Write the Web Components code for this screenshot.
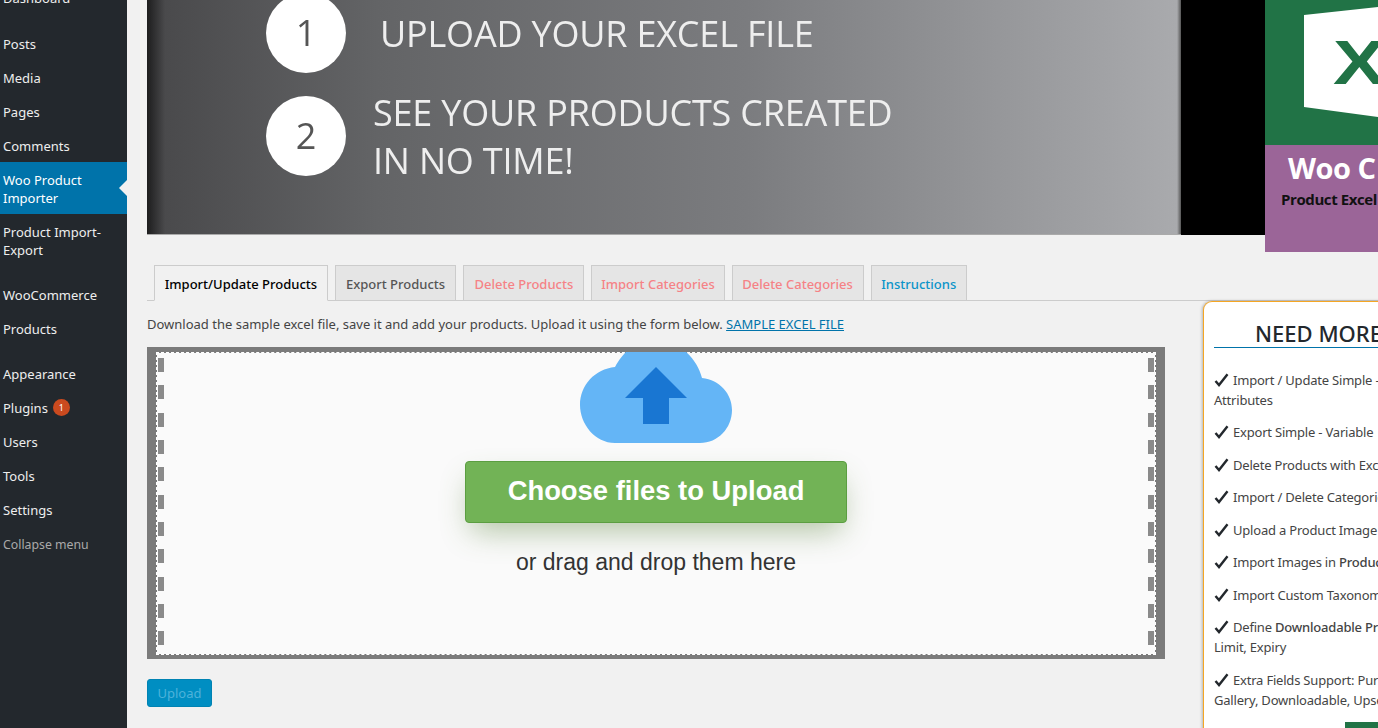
<!DOCTYPE html>
<html lang="en">
<head>
<meta charset="utf-8">
<title>Woo Product Importer</title>
<style>
	html, body { margin: 0; height: 100%; overflow: hidden; }
	body {
		display: flex;
		background: #f1f1f1;
		color: #444;
		font: 13px/20px "Noto Sans", "Open Sans", sans-serif;
	}
</style>
</head>
<body>
<wp-sidebar>
	<wp-menu-item style="margin-top:-19px">Dashboard</wp-menu-item>
	<wp-menu-item style="margin-top:12px">Posts</wp-menu-item>
	<wp-menu-item>Media</wp-menu-item>
	<wp-menu-item>Pages</wp-menu-item>
	<wp-menu-item>Comments</wp-menu-item>
	<wp-menu-item current style="margin-top:-1px;padding-top:9px;padding-bottom:7px">Woo Product Importer</wp-menu-item>
	<wp-menu-item style="padding-top:9px">Product Import-Export</wp-menu-item>
	<wp-menu-item style="margin-top:11px">WooCommerce</wp-menu-item>
	<wp-menu-item>Products</wp-menu-item>
	<wp-menu-item style="margin-top:11px">Appearance</wp-menu-item>
	<wp-menu-item badge="1">Plugins</wp-menu-item>
	<wp-menu-item>Users</wp-menu-item>
	<wp-menu-item>Tools</wp-menu-item>
	<wp-menu-item>Settings</wp-menu-item>
	<wp-menu-item muted>Collapse menu</wp-menu-item>
</wp-sidebar>
<importer-page>
	<promo-banner></promo-banner>
	<tab-bar>
		<nav-tab active>Import/Update Products</nav-tab>
		<nav-tab style="padding-inline:10.2px">Export Products</nav-tab>
		<nav-tab tone="red" style="padding-inline:10.2px">Delete Products</nav-tab>
		<nav-tab tone="red" style="padding-inline:8.7px">Import Categories</nav-tab>
		<nav-tab tone="red">Delete Categories</nav-tab>
		<nav-tab tone="blue">Instructions</nav-tab>
	</tab-bar>
	<upload-form slot="form"></upload-form>
	<feature-panel slot="panel" heading="NEED MORE">
		<feature-item>Import / Update Simple -<br>Attributes</feature-item>
		<feature-item>Export Simple - Variable</feature-item>
		<feature-item>Delete Products with Excel</feature-item>
		<feature-item>Import / Delete Categories</feature-item>
		<feature-item>Upload a Product Image</feature-item>
		<feature-item>Import Images in <b>Product</b></feature-item>
		<feature-item>Import Custom Taxonomies</feature-item>
		<feature-item>Define <b>Downloadable Products</b><br>Limit, Expiry</feature-item>
		<feature-item>Extra Fields Support: Purchase<br>Gallery, Downloadable, Upsell</feature-item>
	</feature-panel>
</importer-page>

<script>
// Admin menu column
class WpSidebar extends HTMLElement {
	constructor() {
		super();
		this.attachShadow({mode:'open'});
		this.shadowRoot.innerHTML = `
			<style>
				:host {
					display: block;
					flex: 0 0 127px;
					height: 100%;
					overflow: hidden;
					background: #23282d;
				}
			</style>
			<slot></slot>
		`;
	}
}

class WpMenuItem extends HTMLElement {
	constructor() {
		super();
		this.attachShadow({mode:'open'});
		const badge = this.getAttribute('badge');
		this.shadowRoot.innerHTML = `
			<style>
				:host {
					display: block;
					position: relative;
					padding: 8px 4px 8px 3px;
					line-height: 18px;
					color: #eee;
				}
				:host([current]) { background: #0073aa; color: #fff; }
				:host([current])::after {
					content: '';
					position: absolute;
					right: 0;
					top: 50%;
					margin-top: -8px;
					border: 8px solid transparent;
					border-left-width: 0;
					border-right-color: #f1f1f1;
				}
				:host([muted]) { color: #aaa; font-size: 12.3px; padding-top: 9px; }
				.badge {
					display: inline-block;
					width: 17px;
					height: 17px;
					margin-left: 5px;
					border-radius: 50%;
					background: #ca4a1f;
					color: #fff;
					font-size: 9px;
					line-height: 17px;
					text-align: center;
					vertical-align: top;
				}
			</style>
			<slot></slot>${badge ? `<span class="badge">${badge}</span>` : ''}
		`;
	}
}

// Two-part layout: banner and tabs on top, form and sales panel below
class ImporterPage extends HTMLElement {
	constructor() {
		super();
		this.attachShadow({mode:'open'});
		this.shadowRoot.innerHTML = `
			<style>
				:host {
					display: block;
					flex: 1;
					min-width: 0;
					height: 100%;
					overflow: hidden;
					padding-left: 20px;
				}
				.columns {
					display: flex;
					gap: 38px;
					align-items: flex-start;
				}
			</style>
			<slot></slot>
			<div class="columns">
				<slot name="form"></slot>
				<slot name="panel"></slot>
			</div>
		`;
	}
}

class PromoBanner extends HTMLElement {
	constructor() {
		super();
		this.attachShadow({mode:'open'});
		this.shadowRoot.innerHTML = `
			<style>
				:host {
					display: flex;
					height: 252px;
					align-items: flex-start;
					overflow: hidden;
					font-family: "Open Sans", sans-serif;
				}
				.art {
					flex: 0 0 1034px;
					box-sizing: border-box;
					height: 235px;
					padding-left: 119px;
					overflow: hidden;
					background: linear-gradient(90deg, #1d1d1e 0, #4a4a4c 18px, #636466 230px, #7b7c7f 600px, #a7a8ab 1010px, #a9aaad 1030px, #555 1034px);
					border-bottom: 1px solid #aaa;
					color: #eee;
					filter: blur(.45px);
				}
				.step { display: flex; align-items: center; }
				.step:first-child { margin-top: -7px; }
				.step + .step { margin-top: 23px; align-items: flex-start; }
				.num {
					flex: 0 0 80px;
					height: 80px;
					border-radius: 50%;
					background: #fff;
					color: #555;
					font-size: 36px;
					line-height: 80px;
					text-align: center;
				}
				.say {
					font-size: 36px;
					line-height: 48px;
					letter-spacing: -.2px;
					white-space: nowrap;
				}
				.one { margin-left: 34px; margin-top: 2px; }
				.two { margin-left: 27px; margin-top: -7px; }
				.gap { flex: 0 0 84px; height: 235px; background: #000; }
				.box {
					flex: 0 0 113px;
					height: 252px;
					overflow: hidden;
					background: #9b6598;
					font-family: "Open Sans", sans-serif;
					white-space: nowrap;
				}
				.green {
					height: 145px;
					padding: 7px 0 0 39px;
					box-sizing: border-box;
					background: #217346;
				}
				.sheet {
					height: 110px;
					padding-left: 29px;
					background: #fff;
					clip-path: polygon(0 8px, 100% 0, 100% 100%, 0 100px);
					color: #217346;
					font: bold 63px/110px "Liberation Sans", sans-serif;
					overflow: hidden;
				}
				.sheet span { display: inline-block; transform: scaleX(1.25); transform-origin: left; }
				.woo {
					padding: 3px 0 0 23px;
					color: #fff;
					font-size: 29px;
					font-weight: 700;
					line-height: 40px;
					letter-spacing: -.5px;
				}
				.sub {
					padding: 1px 0 0 16px;
					color: #111;
					font-size: 15px;
					font-weight: 700;
					line-height: 20px;
					letter-spacing: -.4px;
				}
			</style>
			<div class="art">
				<div class="step"><div class="num">1</div><div class="say one">UPLOAD YOUR EXCEL FILE</div></div>
				<div class="step"><div class="num">2</div><div class="say two">SEE YOUR PRODUCTS CREATED<br>IN NO TIME!</div></div>
			</div>
			<div class="gap"></div>
			<div class="box">
				<div class="green"><div class="sheet"><span>X</span></div></div>
				<div class="woo">Woo C</div>
				<div class="sub">Product Excel</div>
			</div>
		`;
	}
}

class TabBar extends HTMLElement {
	constructor() {
		super();
		this.attachShadow({mode:'open'});
		this.shadowRoot.innerHTML = `
			<style>
				:host {
					display: flex;
					gap: 7px;
					margin-top: 13px;
					padding-left: 7px;
					height: 36px;
					box-sizing: border-box;
					border-bottom: 1px solid #ccc;
				}
			</style>
			<slot></slot>
		`;
	}
}

class NavTab extends HTMLElement {
	constructor() {
		super();
		this.attachShadow({mode:'open'});
		this.shadowRoot.innerHTML = `
			<style>
				:host {
					display: block;
					height: 36px;
					box-sizing: border-box;
					padding: 8px 9.7px;
					border: 1px solid #ccc;
					background: #e5e5e5;
					color: #555;
					font-weight: 500;
					line-height: 20px;
					white-space: nowrap;
				}
				:host([active]) { background: #f1f1f1; border-bottom-color: #f1f1f1; color: #000; }
				:host([tone=red]) { color: #f58286; }
				:host([tone=blue]) { color: #0a94c9; }
			</style>
			<slot></slot>
		`;
	}
}

// Instruction line, drop zone and submit button
class UploadForm extends HTMLElement {
	constructor() {
		super();
		this.attachShadow({mode:'open'});
		this.shadowRoot.innerHTML = `
			<style>
				:host { display: block; flex: 0 0 1018px; }
				p { margin: 13px 0; white-space: nowrap; }
				a { color: #0073aa; text-decoration: underline; }
				.zone {
					box-sizing: border-box;
					height: 312px;
					padding: 5px 9px 4px;
					background: #7b7b7b;
				}
				.inner {
					box-sizing: border-box;
					display: grid;
					grid-template-columns: 6px 1fr 6px;
					height: 100%;
					padding: 0 1px 0 1px;
					border: 1px dashed #fff;
					background: #fafafa;
					background-clip: padding-box;
				}
				.rail {
					margin-top: 5px;
					background: repeating-linear-gradient(#8a8a8a 0 14px, transparent 14px 27.33px);
				}
				.middle {
					display: flex;
					flex-direction: column;
					align-items: center;
					margin-top: -1px;
				}
				svg { display: block; }
				.pick {
					box-sizing: border-box;
					width: 382px;
					height: 62px;
					margin-top: 18px;
					border: 1px solid #5b9e41;
					border-radius: 4px;
					background: #72b356;
					box-shadow: 0 14px 30px -6px rgba(90, 130, 60, .45);
					color: #fff;
					font: bold 27.4px/58px "Liberation Sans", sans-serif;
					text-align: center;
				}
				.or {
					margin-top: 25px;
					color: #333;
					font: 23px/28px "Liberation Sans", sans-serif;
				}
				.upload {
					width: 65px;
					height: 28px;
					margin-top: 20px;
					border: 1px solid #0083b3;
					border-radius: 3px;
					background: #008ec2;
					color: #4db2da;
					line-height: 26px;
					text-align: center;
					box-sizing: border-box;
				}
			</style>
			<p>Download the sample excel file, save it and add your products. Upload it using the form below. <a>SAMPLE EXCEL FILE</a></p>
			<div class="zone">
				<div class="inner">
					<div class="rail"></div>
					<div class="middle">
						<svg width="152" height="91" viewBox="0 0 152 91">
							<path fill="#64b5f6" d="M35 91C15 91 0 72 0 53C0 33 15 17 35 15C40 6 44 2 48 -2L104 -2C114 7 119 15 122 26C140 28 152 42 152 58C152 76 138 91 120 91Z"/>
							<path fill="#1976d2" d="M76 15L107 46H89V72H63V46H45Z"/>
						</svg>
						<div class="pick">Choose files to Upload</div>
						<div class="or">or drag and drop them here</div>
					</div>
					<div class="rail"></div>
				</div>
			</div>
			<div class="upload">Upload</div>
		`;
	}
}

class FeaturePanel extends HTMLElement {
	constructor() {
		super();
		this.attachShadow({mode:'open'});
		this.shadowRoot.innerHTML = `
			<style>
				:host {
					display: block;
					flex: 0 0 auto;
					width: 300px;
					box-sizing: border-box;
					height: 440px;
					padding: 0 0 0 10px;
					background: #fff;
					border-top: 1px solid #f5a623;
					border-left: 1px solid #f5a623;
					border-radius: 9px 0 0 0;
					box-shadow: -1px 0 3px rgba(0, 0, 0, .25);
					white-space: nowrap;
				}
				h2 {
					margin: 0 0 21.7px;
					height: 46px;
					box-sizing: border-box;
					padding: 16px 0 0 41px;
					border-bottom: 1px solid #0073aa;
					color: #23282d;
					font-size: 22px;
					font-weight: 500;
					line-height: 30px;
				}
				.buy { width: 40px; height: 20px; margin: 12px 0 0 131px; background: #217346; }
			</style>
			<h2></h2>
			<slot></slot>
			<div class="buy"></div>
		`;
		this.shadowRoot.querySelector('h2').textContent = this.getAttribute('heading');
	}
}

class FeatureItem extends HTMLElement {
	constructor() {
		super();
		this.attachShadow({mode:'open'});
		this.shadowRoot.innerHTML = `
			<style>
				:host { display: block; margin-bottom: 12.5px; line-height: 20px; letter-spacing: -.2px; }
				svg { vertical-align: -2px; margin-right: 4px; }
				::slotted(b) { font-weight: 500; }
			</style>
			<svg width="15" height="14" viewBox="0 0 15 14"><path fill="none" stroke="#23282d" stroke-width="2.4" d="M1.5 8L5 12L13.5 1.2"/></svg><slot></slot>
		`;
	}
}

customElements.define('wp-sidebar', WpSidebar);
customElements.define('wp-menu-item', WpMenuItem);
customElements.define('importer-page', ImporterPage);
customElements.define('promo-banner', PromoBanner);
customElements.define('tab-bar', TabBar);
customElements.define('nav-tab', NavTab);
customElements.define('upload-form', UploadForm);
customElements.define('feature-panel', FeaturePanel);
customElements.define('feature-item', FeatureItem);
</script>
</body>
</html>
